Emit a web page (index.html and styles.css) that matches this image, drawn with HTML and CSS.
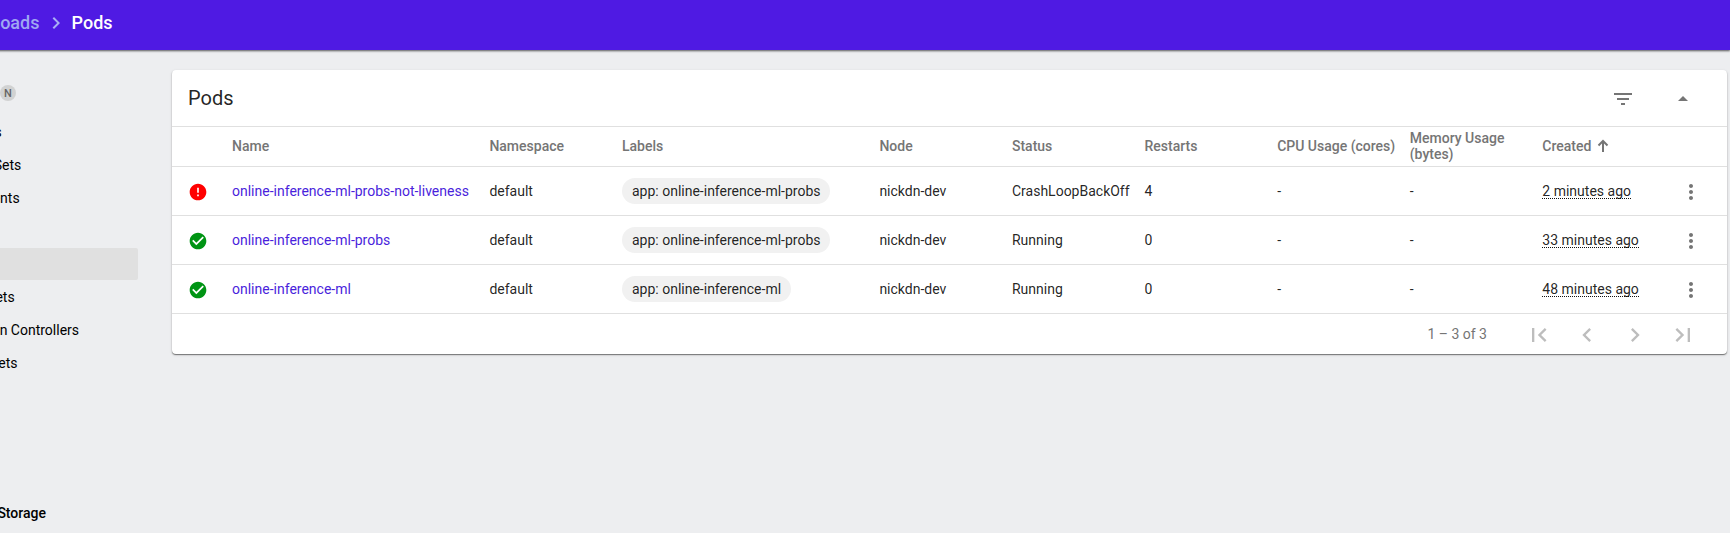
FILE: index.html
```html
<!DOCTYPE html>
<html lang="en">
<head>
<meta charset="utf-8">
<title>Pods</title>
<link rel="stylesheet" href="styles.css">
</head>
<body>
<svg class="defs" aria-hidden="true">
  <symbol id="error" viewBox="0 0 24 24"><path d="M12 2C6.480 2 2 6.480 2 12s4.480 10 10 10 10-4.480 10-10S17.520 2 12 2zm1 15h-2v-2h2v2zm0-4h-2V7h2v6z"/></symbol>
  <symbol id="check" viewBox="0 0 24 24"><path d="M12 2C6.480 2 2 6.480 2 12s4.480 10 10 10 10-4.480 10-10S17.520 2 12 2zm-2 15l-5-5 1.410-1.410L10 14.170l7.590-7.590L19 8l-9 9z"/></symbol>
  <symbol id="more" viewBox="0 0 24 24"><path d="M12 8c1.100 0 2-.9 2-2s-.9-2-2-2-2 .9-2 2 .9 2 2 2zm0 2c-1.100 0-2 .9-2 2s.9 2 2 2 2-.9 2-2-.9-2-2-2zm0 6c-1.100 0-2 .9-2 2s.9 2 2 2 2-.9 2-2-.9-2-2-2z"/></symbol>
</svg>
<header class="toolbar">
  <span class="crumb">Workloads</span>
  <svg class="crumb-arrow" viewBox="0 0 24 24"><path d="M10 6L8.590 7.410 13.170 12l-4.580 4.590L10 18l6-6z"/></svg>
  <span class="crumb current">Pods</span>
</header>
<div class="layout">
  <nav class="sidebar">
    <div class="nav-title"><span class="badge">N</span></div>
    <a class="nav-item">Cron Jobs</a>
    <a class="nav-item">Daemon Sets</a>
    <a class="nav-item">Deployments</a>
    <a class="nav-item"></a>
    <a class="nav-item active"></a>
    <a class="nav-item">Replica Sets</a>
    <a class="nav-item">Replication Controllers</a>
    <a class="nav-item">Stateful Sets</a>
    <div class="nav-section">Storage</div>
  </nav>
  <main class="card">
    <div class="card-head">
      <h1 class="card-title">Pods</h1>
      <svg class="icon filter" viewBox="0 0 24 24"><path d="M10 18h4v-2h-4v2zM3 6v2h18V6H3zm3 7h12v-2H6v2z"/></svg>
      <svg class="icon collapse" viewBox="0 0 24 24"><path d="M7 14l5-5 5 5z"/></svg>
    </div>
    <div class="row head">
      <span></span><span>Name</span><span>Namespace</span><span>Labels</span><span>Node</span><span>Status</span><span>Restarts</span><span>CPU Usage (cores)</span><span>Memory Usage (bytes)</span>
      <span class="sorted">Created<svg class="sort" viewBox="0 0 16 16"><path d="M8 14V3M3.500 7.500L8 3l4.500 4.500"/></svg></span><span></span>
    </div>
    <div class="row">
      <svg class="status bad"><use href="#error"/></svg><a class="link">online-inference-ml-probs-not-liveness</a><span>default</span><span><span class="chip">app: online-inference-ml-probs</span></span><span>nickdn-dev</span><span>CrashLoopBackOff</span><span>4</span><span>-</span><span>-</span><span><span class="time">2 minutes ago</span></span><svg class="icon menu"><use href="#more"/></svg>
    </div>
    <div class="row">
      <svg class="status good"><use href="#check"/></svg><a class="link">online-inference-ml-probs</a><span>default</span><span><span class="chip">app: online-inference-ml-probs</span></span><span>nickdn-dev</span><span>Running</span><span>0</span><span>-</span><span>-</span><span><span class="time">33 minutes ago</span></span><svg class="icon menu"><use href="#more"/></svg>
    </div>
    <div class="row">
      <svg class="status good"><use href="#check"/></svg><a class="link">online-inference-ml</a><span>default</span><span><span class="chip">app: online-inference-ml</span></span><span>nickdn-dev</span><span>Running</span><span>0</span><span>-</span><span>-</span><span><span class="time">48 minutes ago</span></span><svg class="icon menu"><use href="#more"/></svg>
    </div>
    <div class="pager">
      <span class="range">1 – 3 of 3</span>
      <svg class="page" viewBox="0 0 24 24"><path d="M18.410 16.590L13.820 12l4.590-4.590L17 6l-6 6 6 6zM6 6h2v12H6z"/></svg>
      <svg class="page" viewBox="0 0 24 24"><path d="M15.410 7.410L14 6l-6 6 6 6 1.410-1.410L10.830 12z"/></svg>
      <svg class="page" viewBox="0 0 24 24"><path d="M10 6L8.590 7.410 13.170 12l-4.580 4.590L10 18l6-6z"/></svg>
      <svg class="page" viewBox="0 0 24 24"><path d="M5.590 7.410L10.180 12l-4.590 4.590L7 18l6-6-6-6zM16 6h2v12h-2z"/></svg>
    </div>
  </main>
</div>
</body>
</html>
```
FILE: styles.css
```css
* { box-sizing: border-box; }
body {
  margin: 0;
  height: 533px;
  overflow: hidden;
  background: #edeef0;
  color: rgba(0, 0, 0, .87);
  font: 14px/20px Roboto, sans-serif;
}
.defs { display: none; }
svg { display: block; flex: none; }

.toolbar {
  display: flex;
  align-items: center;
  height: 50px;
  padding-bottom: 5px;
  margin-left: -60px;
  padding-left: 14px;
  background: #4f1ae3;
  box-shadow: 0 1px 2px rgba(0, 0, 0, .65);
  color: #fff;
  font-size: 18px;
  font-weight: 500;
}
.crumb:first-child { width: 85px; text-align: right; color: #a0a8f2; }
.crumb-arrow { width: 24px; height: 24px; margin: 0 4px 0 4.600px; fill: #a9aff4; }

.layout { display: flex; }
.sidebar { width: 220px; margin-left: -82px; padding-top: 27px; color: #000; }
.nav-title {
  display: flex;
  align-items: center;
  justify-content: flex-end;
  width: 98px;
  height: 32px;
  margin-bottom: 7px;
}
.badge {
  width: 16px;
  height: 16px;
  border-radius: 50%;
  background: #d1d2d2;
  color: #666;
  font-size: 11px;
  font-weight: 500;
  line-height: 17px;
  text-align: center;
}
.nav-item {
  display: flex;
  align-items: center;
  height: 32px;
  margin-bottom: 1px;
  padding-left: 20px;
  border-radius: 2px;
}
.nav-item.active { background: #e0e0e0; }
.nav-section { margin-top: 124px; width: 128px; text-align: right; font-weight: 500; }

.card {
  width: 1555px;
  height: 284px;
  margin: 20px 0 0 34px;
  background: #fff;
  border-radius: 4px;
  box-shadow: 0 1px 1px rgba(0, 0, 0, .45), 0 1px 3px rgba(0, 0, 0, .16);
}
.card-head { display: flex; align-items: center; height: 56px; padding: 0 32px 0 16px; }
.card-title { flex: 1; margin: 0; font-size: 20px; line-height: 28px; font-weight: 400; }
.icon { width: 24px; height: 24px; margin-top: 2px; fill: #757575; }
.filter { margin-right: 36px; }

.row {
  display: grid;
  grid-template-columns: 44px 257.4px 132.6px 257.4px 132.6px 132.6px 132.6px 132.6px 132.6px 132.6px 1fr;
  align-items: center;
  height: 49px;
  padding-left: 16px;
  border-top: 1px solid #e0e0e0;
  white-space: nowrap;
}
.head { height: 40px; padding-bottom: 1px; color: #757575; font-weight: 500; line-height: 16px; white-space: normal; }
.status { width: 20px; height: 20px; margin-top: 1px; }
.bad { fill: #f00; }
.good { fill: #009414; }
.link { color: #4a1fdc; }
.chip { display: inline-block; height: 26px; padding: 0 10px; border-radius: 13px; background: #f1f1f1; line-height: 26px; }
.time { display: inline-block; height: 16px; line-height: 16px; border-bottom: 1px dotted #111; }
.sorted { display: flex; align-items: center; }
.sort { width: 16px; height: 16px; margin-left: 4px; fill: none; stroke: #757575; stroke-width: 2; }
.menu { margin-left: 4px; }

.pager { display: flex; align-items: center; justify-content: flex-end; gap: 20px; height: 41px; padding-right: 30px; border-top: 1px solid #e0e0e0; color: #757575; }
.range { margin-right: 18px; }
.page { width: 28px; height: 28px; margin-top: 2px; fill: #bdbdbd; }
```
